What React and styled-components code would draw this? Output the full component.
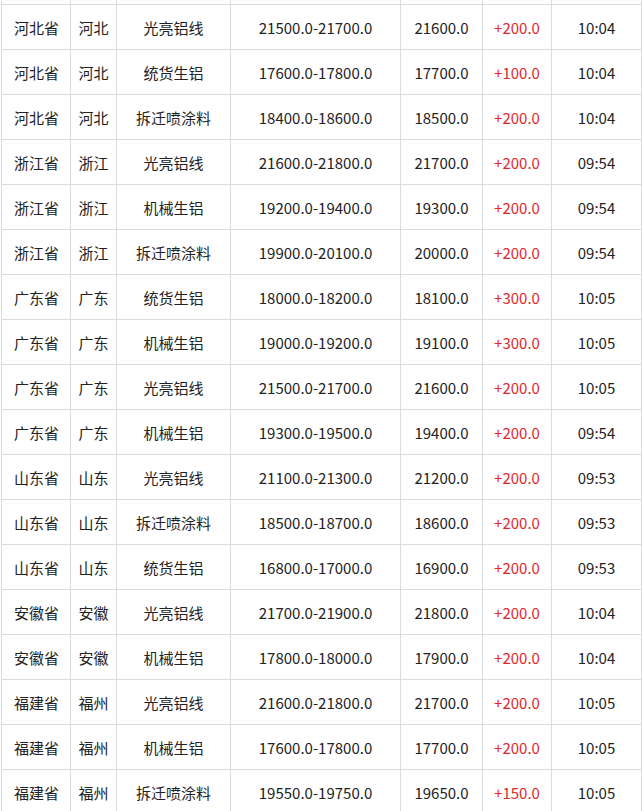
import React from "react";
import styled, { createGlobalStyle } from "styled-components";

const GlobalStyle = createGlobalStyle`
  html, body {
    margin: 0;
    padding: 0;
    background: #fff;
  }
  body {
    font-family: "Noto Sans CJK SC", "Noto Sans", sans-serif;
    color: #222;
  }
`;

// first row sits mostly above the viewport, only its bottom edge shows
const rows = [
  ["", "", "", "", "", "", ""],
  ["河北省", "河北", "光亮铝线", "21500.0-21700.0", "21600.0", "+200.0", "10:04"],
  ["河北省", "河北", "统货生铝", "17600.0-17800.0", "17700.0", "+100.0", "10:04"],
  ["河北省", "河北", "拆迁喷涂料", "18400.0-18600.0", "18500.0", "+200.0", "10:04"],
  ["浙江省", "浙江", "光亮铝线", "21600.0-21800.0", "21700.0", "+200.0", "09:54"],
  ["浙江省", "浙江", "机械生铝", "19200.0-19400.0", "19300.0", "+200.0", "09:54"],
  ["浙江省", "浙江", "拆迁喷涂料", "19900.0-20100.0", "20000.0", "+200.0", "09:54"],
  ["广东省", "广东", "统货生铝", "18000.0-18200.0", "18100.0", "+300.0", "10:05"],
  ["广东省", "广东", "机械生铝", "19000.0-19200.0", "19100.0", "+300.0", "10:05"],
  ["广东省", "广东", "光亮铝线", "21500.0-21700.0", "21600.0", "+200.0", "10:05"],
  ["广东省", "广东", "机械生铝", "19300.0-19500.0", "19400.0", "+200.0", "09:54"],
  ["山东省", "山东", "光亮铝线", "21100.0-21300.0", "21200.0", "+200.0", "09:53"],
  ["山东省", "山东", "拆迁喷涂料", "18500.0-18700.0", "18600.0", "+200.0", "09:53"],
  ["山东省", "山东", "统货生铝", "16800.0-17000.0", "16900.0", "+200.0", "09:53"],
  ["安徽省", "安徽", "光亮铝线", "21700.0-21900.0", "21800.0", "+200.0", "10:04"],
  ["安徽省", "安徽", "机械生铝", "17800.0-18000.0", "17900.0", "+200.0", "10:04"],
  ["福建省", "福州", "光亮铝线", "21600.0-21800.0", "21700.0", "+200.0", "10:05"],
  ["福建省", "福州", "机械生铝", "17600.0-17800.0", "17700.0", "+200.0", "10:05"],
  ["福建省", "福州", "拆迁喷涂料", "19550.0-19750.0", "19650.0", "+150.0", "10:05"],
];

const widths = [69, 46, 114, 170, 82, 69, 90];

const Viewport = styled.div`
  height: 811px;
  overflow: hidden;
`;

const PriceTable = styled.table`
  border-collapse: collapse;
  table-layout: fixed;
  width: 641px;
  margin: -41px 0 0 1px;
  font-size: 15px;
`;

const Row = styled.tr`
  height: 45px;
`;

const Cell = styled.td`
  border: 1px solid #dcdcdc;
  padding: 2px 0 0;
  padding-left: ${(p) => (p.$left ? "12px" : "0")};
  text-align: ${(p) => (p.$left ? "left" : "center")};
  color: ${(p) => (p.$up ? "#e3262b" : "#222")};
  white-space: nowrap;
  line-height: 20px;
`;

export default function App() {
  return (
    <>
      <GlobalStyle />
      <Viewport>
        <PriceTable>
          <colgroup>
            {widths.map((w, i) => (
              <col key={i} style={{ width: w }} />
            ))}
          </colgroup>
          <tbody>
            {rows.map((r, i) => (
              <Row key={i}>
                {r.map((v, j) => (
                  <Cell key={j} $left={j === 0} $up={j === 5}>
                    {v}
                  </Cell>
                ))}
              </Row>
            ))}
          </tbody>
        </PriceTable>
      </Viewport>
    </>
  );
}
